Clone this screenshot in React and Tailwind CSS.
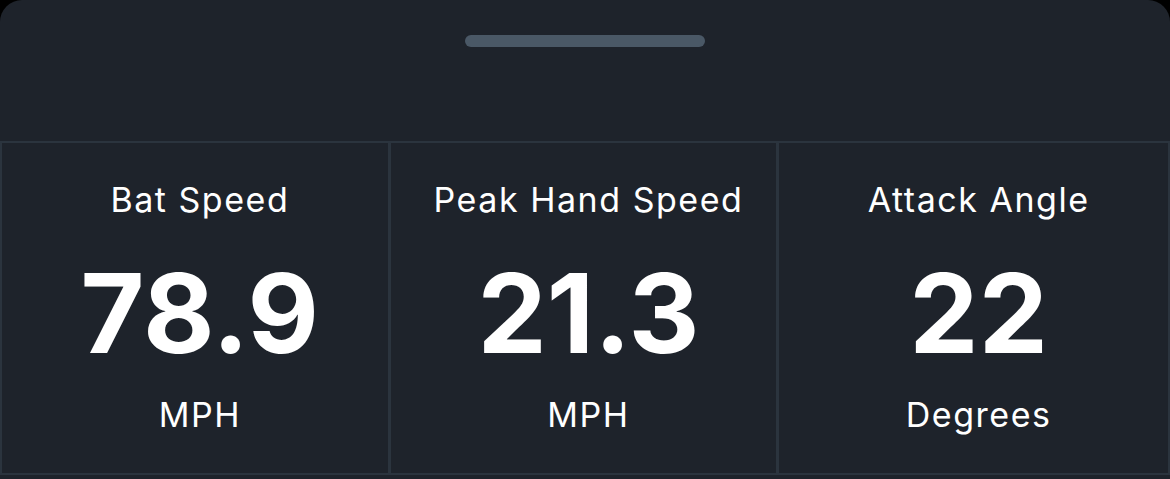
const stats = [
  { label: 'Bat Speed', value: '78.9', unit: 'MPH' },
  { label: 'Peak Hand Speed', value: '21.3', unit: 'MPH' },
  { label: 'Attack Angle', value: '22', unit: 'Degrees' },
];

const StatCell = ({ stat, last }) => (
  <div
    className={`flex flex-col items-center pl-[10px] pt-[37px] pb-[38px] ${
      last ? '' : 'border-r-[3px] border-[#2b343e]'
    }`}
  >
    <span className="text-[34px] leading-[40px] tracking-[0.045em] text-white">{stat.label}</span>
    <span className="mt-[38px] text-[110px] leading-none font-bold text-white">
      {stat.value}
    </span>
    <span className="mt-[27px] text-[34px] leading-[40px] tracking-[0.045em] text-white">
      {stat.unit}
    </span>
  </div>
);

const App = () => {
  return (
    <div
      className="w-[1170px] h-[479px] bg-black overflow-hidden"
      style={{ fontFamily: 'Inter, "Noto Sans", sans-serif' }}
    >
      <div className="h-full bg-[#1e232b] rounded-t-[22px]">
        <div className="h-[143px] flex justify-center pt-[35px] border-b-[2px] border-[#2b343e]">
          <div className="w-[240px] h-[12px] rounded-full bg-[#4a5866]" />
        </div>
        <div className="grid grid-cols-3 border-x-[2px] border-b-[2px] border-[#2b343e]">
          {stats.map((stat, i) => (
            <StatCell key={stat.label} stat={stat} last={i === stats.length - 1} />
          ))}
        </div>
      </div>
    </div>
  );
};

export default App;
